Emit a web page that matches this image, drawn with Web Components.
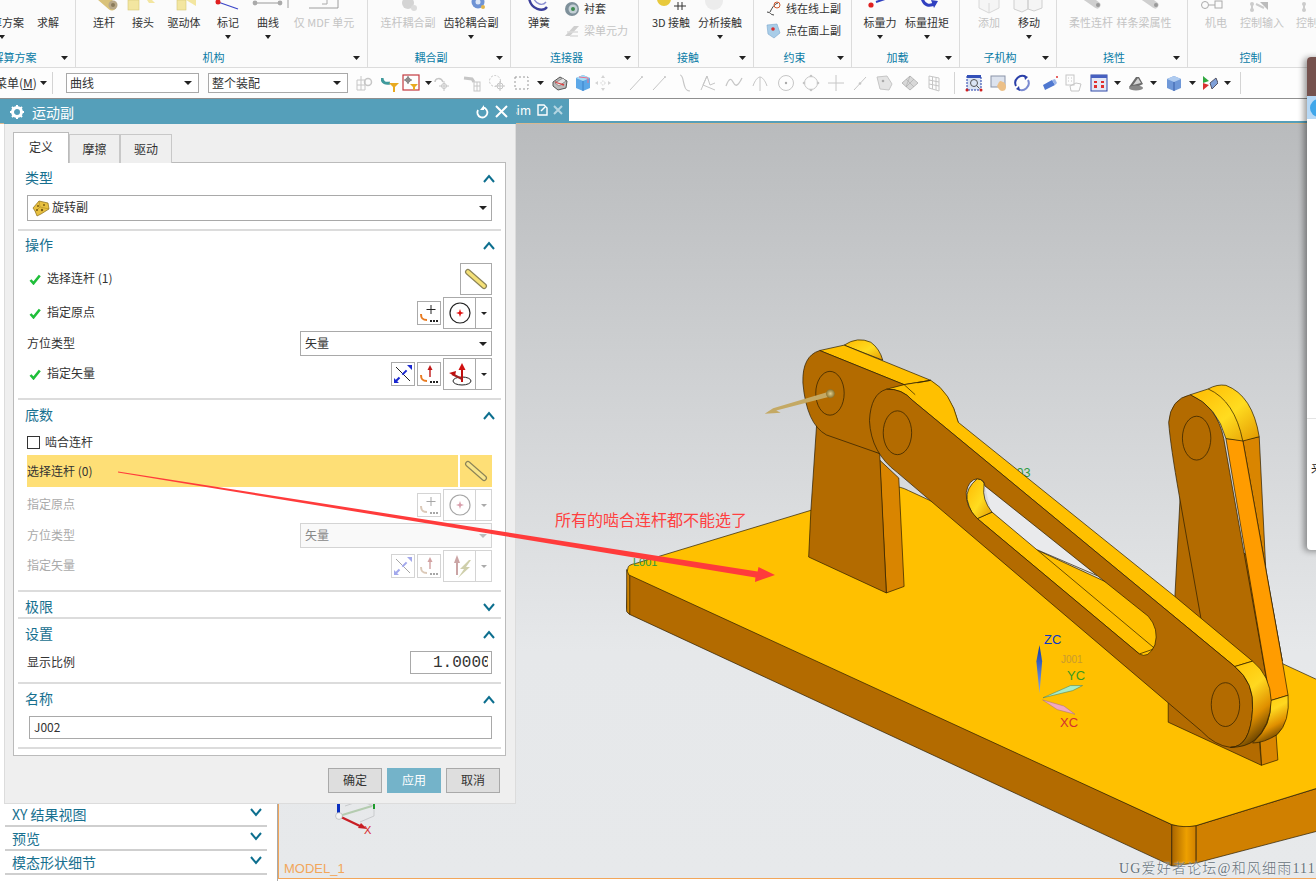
<!DOCTYPE html>
<html lang="zh"><head><meta charset="utf-8"><title>运动副</title>
<style>
html,body{margin:0;padding:0;background:#fff;width:1316px;height:882px;overflow:hidden}
body{font:12px/1 "Noto Sans CJK SC","Liberation Sans",sans-serif;color:#333}
svg{display:block}
</style></head><body>

<ui-app>
<ui-ribbon slot="top">
  <ui-group w="106" label="解算方案" arrow style="margin-left:-30px">
    <ui-tool w="54" pad="5" arrow>解算方案</ui-tool><ui-tool w="36" style="margin-left:1px">求解</ui-tool>
  </ui-group>
  <ui-group w="292" label="机构" arrow>
    <ui-tool w="40" pad="8"><svg slot="icon" width="40" height="15"><path d="M14 -6L28 6" stroke="#d9c27a" stroke-width="9" stroke-linecap="round"/><circle cx="29" cy="5" r="4.5" fill="#b8a888"/><circle cx="29" cy="5" r="2" fill="#8a7a5a"/></svg>连杆</ui-tool>
    <ui-tool w="38"><svg slot="icon" width="38" height="15"><rect x="4" y="0" width="11" height="10" fill="#f3e6a0" stroke="#d8c878" stroke-width=".6"/><path d="M23 0h5l3 3h-6z" fill="#f3e6a0"/></svg>接头</ui-tool>
    <ui-tool w="44"><svg slot="icon" width="44" height="15"><rect x="15" y="0" width="9" height="10" fill="#f3e6a0" stroke="#d8c878" stroke-width=".6"/><path d="M24 0h10v6z" fill="#f3e6a0"/></svg>驱动体</ui-tool>
    <ui-tool w="44" arrow><svg slot="icon" width="44" height="15"><path d="M12 2L32 9" stroke="#3a45c8" stroke-width="1.2"/><circle cx="12" cy="2" r="2.5" fill="#e02020"/></svg>标记</ui-tool>
    <ui-tool w="36" arrow><svg slot="icon" width="36" height="15"><path d="M5 3H30" stroke="#999"/><circle cx="5" cy="3" r="2.4" fill="#aaa"/><circle cx="30" cy="3" r="2.4" fill="#aaa"/></svg>曲线</ui-tool>
    <ui-tool w="76" off><svg slot="icon" width="76" height="15"><path d="M2 -3v11M23 8h29V-2" stroke="#888" stroke-width=".8" fill="none"/><path d="M41 0v4h-5" stroke="#aaa" fill="none"/></svg>仅 MDF 单元</ui-tool>
  </ui-group>
  <ui-group w="143" label="耦合副" arrow>
    <ui-tool w="64" pad="8" off><svg slot="icon" width="64" height="15"><circle cx="32" cy="3" r="6" fill="#d4d4d4"/><circle cx="38" cy="8" r="3" fill="#dcdcdc"/></svg>连杆耦合副</ui-tool>
    <ui-tool w="62" arrow><svg slot="icon" width="62" height="15"><circle cx="38" cy="2" r="6.5" fill="#6f93d4"/><circle cx="38" cy="2" r="2.5" fill="#dce6f6"/><circle cx="43" cy="7" r="2" fill="#e2b54c"/></svg>齿轮耦合副</ui-tool>
  </ui-group>
  <ui-group w="128" label="连接器" arrow>
    <ui-tool w="40" pad="8"><svg slot="icon" width="40" height="15"><path d="M10 -2c2 12 14 14 18 9" stroke="#3b3f9a" stroke-width="2.4" fill="none"/><path d="M14 -3c3 8 10 9 13 5" stroke="#8b8fd0" stroke-width="1.4" fill="none"/></svg>弹簧</ui-tool>
    <ui-stack style="margin-left:5px">
      <ui-line><svg slot="icon" width="16" height="16"><circle cx="8" cy="8" r="7" fill="#7e909a"/><circle cx="9" cy="8" r="4.5" fill="#c4d0d6"/><circle cx="9" cy="8" r="2" fill="#3f8a50"/></svg>衬套</ui-line>
      <ui-line off><svg slot="icon" width="16" height="16"><path d="M1 13L10 3h5l-9 10z" fill="#cfcfcf"/><path d="M3 9h11M6 13h8" stroke="#dcdcdc" stroke-width="1.5"/></svg>梁单元力</ui-line>
    </ui-stack>
  </ui-group>
  <ui-group w="115" label="接触" arrow>
    <ui-tool w="48" pad="8"><svg slot="icon" width="48" height="15"><circle cx="17" cy="-1" r="7" fill="#e8c93c"/><path d="M27 6h12M31 2v8M35 2v8" stroke="#333" fill="none"/></svg>3D 接触</ui-tool>
    <ui-tool w="50" arrow><svg slot="icon" width="50" height="15"><ellipse cx="19" cy="1" rx="9" ry="9" fill="#ececec"/></svg>分析接触</ui-tool>
  </ui-group>
  <ui-group w="98" label="约束" arrow>
    <ui-stack style="margin-left:11px">
      <ui-line t><svg slot="icon" width="17" height="17"><path d="M2 12c4 0 3 3 7 3M5 12c3-6 5-8 8-9" stroke="#444" fill="none"/><circle cx="12" cy="5" r="3" fill="none" stroke="#d05a30"/></svg>线在线上副</ui-line>
      <ui-line t><svg slot="icon" width="17" height="17"><path d="M2 3l10-1 3 9-6 5-6-4z" fill="#a9cde8" stroke="#7aa6cc" stroke-width=".6"/><circle cx="8" cy="7" r="1.8" fill="#d83030"/></svg>点在面上副</ui-line>
    </ui-stack>
  </ui-group>
  <ui-group w="108" label="加载" arrow>
    <ui-tool w="40" pad="8" arrow><svg slot="icon" width="40" height="15"><circle cx="11" cy="5" r="2.6" fill="#e02020"/><path d="M16 2l9-3" stroke="#3040c0" stroke-width="2"/></svg>标量力</ui-tool>
    <ui-tool w="54" arrow><svg slot="icon" width="54" height="15"><path d="M22 -2c2 8 8 9 13 5" stroke="#3040c0" stroke-width="3" fill="none"/><path d="M31 0l7 1-4 7z" fill="#3040c0"/></svg>标量扭矩</ui-tool>
  </ui-group>
  <ui-group w="97" label="子机构" arrow>
    <ui-tool w="42" pad="8" off><svg slot="icon" width="42" height="15"><path d="M11 0v8l10 5 10-5V0M21 3v10" stroke="#d8d8d8" fill="#f5f5f5"/></svg>添加</ui-tool>
    <ui-tool w="38" arrow><svg slot="icon" width="38" height="15"><path d="M4 0v9l8 3 6-3V0M18 0v9l6 2 8-3V0" stroke="#cfcfcf" fill="#f5f5f5"/></svg>移动</ui-tool>
  </ui-group>
  <ui-group w="131" label="挠性" arrow>
    <ui-tool w="52" pad="8" off><svg slot="icon" width="52" height="15"><path d="M22 -2L32 5" stroke="#cfcfcf" stroke-width="7" stroke-linecap="round"/><circle cx="33" cy="5" r="2" fill="#999"/></svg>柔性连杆</ui-tool>
    <ui-tool w="54" off><svg slot="icon" width="54" height="15"><path d="M28 -2L38 5" stroke="#cfcfcf" stroke-width="7" stroke-linecap="round"/><circle cx="39" cy="5" r="2" fill="#999"/></svg>样条梁属性</ui-tool>
  </ui-group>
  <ui-group w="142" label="控制">
    <ui-tool w="40" pad="8" off><svg slot="icon" width="40" height="15"><circle cx="9" cy="5" r="3.5" fill="none" stroke="#aaa"/><path d="M13 5h6" stroke="#aaa"/><rect x="19" y="1" width="7" height="7" fill="none" stroke="#aaa"/></svg>机电</ui-tool>
    <ui-tool w="52" off><svg slot="icon" width="52" height="15"><circle cx="16" cy="4" r="2" fill="#ccc"/><circle cx="16" cy="10" r="2" fill="#ccc"/><path d="M16 4v6M20 4l8 4" stroke="#ccc" stroke-width="2"/><path d="M24 2h8v8z" fill="#bbb"/></svg>控制输入</ui-tool>
    <ui-tool w="60" off><svg slot="icon" width="60" height="15"><circle cx="16" cy="4" r="2" fill="#ccc"/><circle cx="16" cy="10" r="2" fill="#ccc"/><path d="M16 4v6" stroke="#ccc" stroke-width="2"/></svg>控制输出</ui-tool>
  </ui-group>
</ui-ribbon>
<ui-toolbar slot="top"></ui-toolbar>
<ui-tabstrip slot="top"></ui-tabstrip>

<ui-side slot="left">
  <ui-foldrow>XY 结果视图</ui-foldrow>
  <ui-foldrow>预览</ui-foldrow>
  <ui-foldrow>模态形状细节</ui-foldrow>
</ui-side>

<ui-viewport slot="right">
<svg width="1037" height="754" viewBox="279 124 1037 754" style="position:absolute;left:0;top:0">
  <defs>
    <linearGradient id="gold" x1="0" y1="0" x2="1" y2="1"><stop offset="0" stop-color="#ffb800"/><stop offset=".55" stop-color="#ffdc20"/><stop offset="1" stop-color="#e39800"/></linearGradient>
    <linearGradient id="endg" x1="0" y1="0" x2=".4" y2="1"><stop offset="0" stop-color="#ffc000"/><stop offset=".45" stop-color="#ffd820"/><stop offset=".75" stop-color="#e09000"/><stop offset="1" stop-color="#6d4500"/></linearGradient>
    <linearGradient id="corner" x1="0" y1="0" x2="1" y2="0"><stop offset="0" stop-color="#a86400"/><stop offset=".6" stop-color="#eda000"/><stop offset="1" stop-color="#d08000"/></linearGradient>
    <linearGradient id="zsp" x1="0" y1="0" x2="0" y2="1"><stop offset="0" stop-color="#0a38a8"/><stop offset="1" stop-color="#8aaae8"/></linearGradient>
    <radialGradient id="ball"><stop offset="0" stop-color="#e0cf90"/><stop offset="1" stop-color="#8a7430"/></radialGradient>
    <style>.e{stroke:#2a1c00;stroke-width:.7;vector-effect:non-scaling-stroke;stroke-linejoin:round}.d{fill:#b36b00}.m{fill:#d98500}.y{fill:#ffc000}</style>
  </defs>
  <g transform="translate(620,320) scale(.4439,.3591)">
    <path class="e d" d="M18,700L1243,1405V1520L22,820Q15,815 15,800Z"/>
    <path class="e" fill="#cc8200" d="M15,695L22,708V820L15,812Z"/>
    <path class="e" fill="url(#corner)" d="M1243,1405Q1270,1413 1298,1408V1512L1243,1520Z"/>
    <path class="e" fill="#d08000" d="M1298,1408L1600,1293V1414L1298,1512Z"/>
    <path class="e y" d="M18,690Q18,682 35,678L430,530L615,465Q630,462 650,475L1620,1030V1285L1298,1408Q1270,1415 1243,1405L20,710Q14,700 18,690Z"/>

    <path class="e m" d="M1442,1170L1445,1240L1482,1225L1478,1155Z"/>
    <path class="e d" d="M1262,490L1250,770L1235,1060V1120L1445,1240L1440,1165L1470,1150L1452,700Z"/>
    <path class="e d" d="M1285,208Q1240,220 1236,285Q1240,350 1260,490L1310,840L1465,1060L1360,330Q1345,240 1285,208Z"/>
    <path class="e m" d="M1403,335L1440,325L1455,700L1492,950Z"/>
    <path class="e" fill="#ff9c00" d="M1365,330L1403,335L1492,950L1505,1045L1465,1060Z"/>
    <path class="e" fill="url(#gold)" d="M1285,208L1325,192Q1345,178 1365,182Q1425,210 1440,325L1403,337L1365,330Q1345,240 1285,208Z"/>
    <path class="e" d="M1325,192Q1385,225 1403,337" fill="none"/>
    <path class="e" fill="url(#endg)" d="M1465,1060L1505,1045Q1510,1120 1480,1155Q1450,1178 1425,1178Q1470,1130 1465,1060Z"/>
    <ellipse class="e" cx="1299" cy="329" rx="32" ry="61" fill="none"/>

    <path class="e m" d="M585,390L600,760L640,742L628,440Z"/>
    <path class="e d" d="M443,290L430,530L425,660L600,760L585,372Z"/>

    <path class="e" fill="url(#gold)" d="M505,70Q535,45 565,62Q585,80 592,112Z"/>
    <path class="e y" d="M450,85L505,70L700,168L640,180Z"/>
    <path class="e" fill="url(#gold)" d="M695,168Q745,200 762,285L700,230Z"/>
    <path class="e d" d="M450,85Q410,100 412,175Q420,290 465,320L585,372L640,300V180Z"/>
    <ellipse class="e" cx="473" cy="204" rx="32" ry="61" fill="none"/>

    <text x="863" y="436" font-size="26" fill="#2e9a3e" font-family="Liberation Sans" transform="translate(863,436) scale(1.1,1.4) translate(-863,-436)">J003</text>

    <path fill="#e9eaec" d="M822,462L1075,712L940,640L835,530Z"/>
    <path class="e" fill="none" d="M940,640L1075,712"/>
    <path class="e y" d="M805,553L1170,930L1205,915L838,535Z"/>
    <path class="e" fill="url(#gold)" d="M805,442Q778,470 782,500Q790,540 805,553L838,535Q815,500 820,462Q822,445 805,442Z"/>

    <path class="e y" d="M600,193L640,180L700,168Q745,200 762,285L1250,770L1425,950L1385,965L660,225Q635,190 600,193Z"/>
    <path class="e" d="M640,180L665,208M670,175L700,168" fill="none"/>
    <path class="e d" fill-rule="evenodd" d="M600,193Q635,190 660,225L1385,965Q1430,1010 1425,1085Q1420,1190 1375,1190Q1340,1185 1310,1145L625,425Q565,370 562,280Q565,205 600,193ZM805,442Q822,445 822,462L1190,825Q1215,860 1205,905Q1190,945 1170,930L805,553Q778,520 780,480Q785,445 805,442Z"/>
    <path class="e" fill="url(#endg)" d="M1385,965L1425,950Q1465,990 1467,1060Q1465,1130 1430,1170Q1410,1190 1375,1190Q1420,1190 1425,1085Q1430,1010 1385,965Z"/>
    <ellipse class="e" cx="625" cy="314" rx="32" ry="61" fill="none"/>
    <ellipse class="e" cx="1364" cy="1071" rx="32" ry="61" fill="none"/>

    <path fill="#c4a964" d="M470,200L345,246L326,261L362,258L352,252L476,212Z"/>
    <ellipse cx="474" cy="205" rx="10" ry="12" fill="url(#ball)"/>

    <path fill="url(#zsp)" d="M945,905L938,950L945,1040L951,950Z"/>
    <path fill="#a6ecc6" stroke="#3e7a60" stroke-width=".5" vector-effect="non-scaling-stroke" d="M953,1052L1015,1018L1042,1018L1020,1032Z"/>
    <path fill="#f2a8c0" stroke="#a07080" stroke-width=".5" vector-effect="non-scaling-stroke" d="M952,1058L1000,1075L1025,1098L985,1085Z"/>
  </g>
  <g font-family="Liberation Sans" font-size="13">
    <text x="1044" y="644" fill="#0838c8">ZC</text>
    <text x="1067" y="680" fill="#3a9a20">YC</text>
    <text x="1060" y="727" fill="#d43030">XC</text>
    <text x="633" y="566" fill="#2e9a3e" font-size="11">L001</text>
    <text x="1061" y="663" fill="#c89a30" font-size="10">J001</text>
  </g>
  <g>
    <path d="M339 816L372 806" stroke="#b4ccb0" stroke-width="2"/><path d="M345 806L360 801L374 806V816L360 822" fill="none" stroke="#c9cbcd"/><rect x="373" y="804" width="2" height="5" fill="#1d9a2c"/>
    <rect x="337" y="804" width="3" height="9" fill="#0a2fc0"/>
    <path d="M341 817L362 827" stroke="#c81e24" stroke-width="2.4"/><path d="M358 828l9 1-6-6z" fill="#c81e24"/>
    <circle cx="339" cy="816" r="3.4" fill="#f4f4f4" stroke="#aaa" stroke-width=".6"/>
    <text x="364" y="834" font-family="Liberation Sans" font-size="11" fill="#d8282c">X</text>
  </g>
</svg>
<ui-model>MODEL_1</ui-model>
</ui-viewport>

<ui-dialog slot="over" heading="运动副">
  <ui-section title="类型" style="--h:30px">
    <ui-select w="465" h="26" style="margin-top:2px"><svg slot="icon" width="18" height="18"><path d="M1 9l6-7 9 2 1 6-8 5-4 2-2-5z" fill="#e8c040" stroke="#8a6c18" stroke-width=".7"/><path d="M7 2l1 6 9 2M8 8L3 13" stroke="#a08020" stroke-width=".5" fill="none"/><circle cx="6" cy="7" r="1" fill="#7a5c10"/><circle cx="12" cy="6" r="1" fill="#7a5c10"/><circle cx="10" cy="11" r="1.200" fill="#7a5c10"/><circle cx="5" cy="11" r="1" fill="#7a5c10"/></svg>旋转副</ui-select>
  </ui-section>
  <ui-section title="操作" style="--h:28px">
    <ui-row h="32" style="margin-top:4px"><ui-label check>选择连杆 (1)</ui-label>
      <ui-btn w="32" h="32"><svg width="24" height="24" viewBox="0 0 24 24"><path d="M4 5L20 19" stroke="#8c8458" stroke-width="6" stroke-linecap="round"/><path d="M4 5L20 19" stroke="#f5e178" stroke-width="3.6" stroke-linecap="round"/></svg></ui-btn></ui-row>
    <ui-row h="32" style="margin-top:2px"><ui-label check>指定原点</ui-label>
      <ui-btn w="24" h="24"><svg width="22" height="22" viewBox="0 0 22 22"><path d="M13 3v9M8.5 7.500h9" stroke="#222"/><path d="M3 12c0 5 2 6 6 6" stroke="#e87a20" stroke-width="2" fill="none"/><path d="M12 19h2M15 19h2M18 19h2" stroke="#222" stroke-width="2"/></svg></ui-btn>
      <ui-split><svg width="24" height="24" viewBox="0 0 24 24"><circle cx="12" cy="12" r="10" fill="none" stroke="#222" stroke-width="1.200"/><path d="M12 8l1 3 3 1-3 1-1 3-1-3-3-1 3-1z" fill="#e01010"/></svg></ui-split></ui-row>
    <ui-row h="25" style="margin-top:2px"><span>方位类型</span><ui-select w="192" h="25">矢量</ui-select></ui-row>
    <ui-row h="32" style="margin-top:2px"><ui-label check>指定矢量</ui-label>
      <ui-btn w="24" h="24"><svg width="22" height="22" viewBox="0 0 22 22"><path d="M4 4L18 18" stroke="#222"/><path d="M4 18L18 4" stroke="#1a28d0" stroke-width="2" stroke-dasharray="5 4 6"/><path d="M15 2h5v5zM2 15v5h5z" fill="#1a28d0"/></svg></ui-btn>
      <ui-btn w="24" h="24"><svg width="22" height="22" viewBox="0 0 22 22"><path d="M12 14V5" stroke="#c01818" stroke-width="1.400"/><path d="M9.500 7L12 2l2.500 5z" fill="#c01818"/><path d="M3 12c0 5 2 6 6 6" stroke="#e87a20" stroke-width="2" fill="none"/><path d="M12 19h2M15 19h2M18 19h2" stroke="#222" stroke-width="2"/></svg></ui-btn>
      <ui-split><svg width="26" height="26" viewBox="0 0 26 26"><ellipse cx="15" cy="20" rx="9" ry="4" fill="none" stroke="#222"/><path d="M15 21V8" stroke="#c01010" stroke-width="2"/><path d="M11.500 9L15 2l3.500 7z" fill="#d01010"/><path d="M15 18L5 13" stroke="#a02020" stroke-width="2"/><path d="M2 12l7-2-1 5z" fill="#c01010"/></svg></ui-split></ui-row>
  </ui-section>
  <ui-section title="底数" style="--h:30px">
    <ui-row h="20" style="margin-top:2px"><ui-check>啮合连杆</ui-check></ui-row>
    <ui-row h="32" style="margin-top:3px"><ui-hilite>选择连杆 (0)</ui-hilite>
      <ui-hilite w="32"><svg width="24" height="24" viewBox="0 0 24 24"><path d="M4 5L20 19" stroke="#8c8458" stroke-width="6" stroke-linecap="round"/><path d="M4 5L20 19" stroke="#f8e488" stroke-width="3.600" stroke-linecap="round"/></svg></ui-hilite></ui-row>
    <ui-row h="32" off style="margin-top:2px"><span>指定原点</span>
      <ui-btn w="24" h="24" off><svg width="22" height="22" viewBox="0 0 22 22"><path d="M13 3v9M8.500 7.500h9" stroke="#222"/><path d="M3 12c0 5 2 6 6 6" stroke="#a87a50" stroke-width="2" fill="none"/><path d="M12 19h2M15 19h2M18 19h2" stroke="#222" stroke-width="2"/></svg></ui-btn>
      <ui-split off><svg width="24" height="24" viewBox="0 0 24 24"><circle cx="12" cy="12" r="10" fill="none" stroke="#222" stroke-width="1.200"/><path d="M12 8l1 3 3 1-3 1-1 3-1-3-3-1 3-1z" fill="#a01030"/></svg></ui-split></ui-row>
    <ui-row h="25" off style="margin-top:2px"><span>方位类型</span><ui-select w="192" h="25" off>矢量</ui-select></ui-row>
    <ui-row h="32" off style="margin-top:2px"><span>指定矢量</span>
      <ui-btn w="24" h="24" off><svg width="22" height="22" viewBox="0 0 22 22"><path d="M4 4L18 18" stroke="#222"/><path d="M4 18L18 4" stroke="#1a28d0" stroke-width="2" stroke-dasharray="5 4 6"/><path d="M15 2h5v5zM2 15v5h5z" fill="#1a28d0"/></svg></ui-btn>
      <ui-btn w="24" h="24" off><svg width="22" height="22" viewBox="0 0 22 22"><path d="M12 14V5" stroke="#901818" stroke-width="1.400"/><path d="M9.500 7L12 2l2.500 5z" fill="#901818"/><path d="M3 12c0 5 2 6 6 6" stroke="#a87a50" stroke-width="2" fill="none"/><path d="M12 19h2M15 19h2M18 19h2" stroke="#222" stroke-width="2"/></svg></ui-btn>
      <ui-split off><svg width="26" height="26" viewBox="0 0 26 26"><path d="M10 22V9" stroke="#802020" stroke-width="2"/><path d="M7 10L10 2l3 8z" fill="#802020"/><path d="M22 7l-9 9h4l-6 9 12-11h-4l5-7z" fill="#8a8a30"/></svg></ui-split></ui-row>
  </ui-section>
  <ui-section title="极限" closed style="--h:30px"></ui-section>
  <ui-section title="设置" style="--h:30px">
    <ui-row h="23" style="margin-top:2px"><span>显示比例</span><ui-input w="82" mono>1.00000</ui-input></ui-row>
  </ui-section>
  <ui-section title="名称" style="--h:30px">
    <ui-row h="23" style="margin-top:2px;margin-left:2px"><ui-input w="463">J002</ui-input></ui-row>
  </ui-section>
  <ui-action slot="actions">确定</ui-action>
  <ui-action slot="actions" primary>应用</ui-action>
  <ui-action slot="actions">取消</ui-action>
</ui-dialog>

<ui-window slot="over"></ui-window>
<ui-note slot="over">所有的啮合连杆都不能选了</ui-note>
<ui-mark slot="over">UG爱好者论坛@和风细雨111</ui-mark>
</ui-app>

<script>
const def=(tag,css,html,init)=>customElements.define(tag,class extends HTMLElement{
  connectedCallback(){ if(this.shadowRoot)return;
    const r=this.attachShadow({mode:'open'});
    r.innerHTML=`<style>${css}</style>${typeof html==='function'?html(this):html}`;
    if(init)init(this,r);
  }});
const tri=(c='#222',w=8,h=4)=>`<svg width="${w}" height="${h}" style="display:block"><path d="M0 0H${w}L${w/2} ${h}z" fill="${c}"/></svg>`;

def('ui-app',`:host{display:block;position:relative;width:1316px;height:882px;overflow:hidden;background:#fff}
 .main{display:flex;height:757px}`,
 `<slot name="top"></slot><div class="main"><slot name="left"></slot><slot name="right"></slot></div><slot name="over"></slot>`);

def('ui-ribbon',`:host{display:flex;height:67px;background:#fbfbfb;border-bottom:1px solid #dcdcdc;overflow:hidden}`,`<slot></slot>`);

def('ui-group',`:host{display:block;flex:none;position:relative;box-sizing:border-box;height:67px;border-right:1px solid #dcdcdc}
 .t{display:flex;height:50px;align-items:flex-start}
 .f{position:absolute;left:0;right:16px;top:50px;text-align:center;font-size:11px;line-height:14px;color:#0a7ca6;white-space:nowrap}
 .a{position:absolute;right:7px;top:56px}`,
 h=>`<div class="t"><slot></slot></div><div class="f">${h.getAttribute('label')}</div>${h.hasAttribute('arrow')?`<div class="a">${tri('#222',7,4)}</div>`:''}`,
 h=>{h.style.width=h.getAttribute('w')+'px'});

def('ui-tool',`:host{display:flex;flex:none;flex-direction:column;align-items:center;height:50px;font-size:11px;color:#333;white-space:nowrap}
 :host([off]){color:#c4c4c4}
 .i{width:100%;height:14px;overflow:hidden;flex:none}
 .l{height:16px;line-height:16px;flex:none}
 .a{margin-top:5px}`,
 h=>`<div class="i"><slot name="icon"></slot></div><div class="l"><slot></slot></div>${h.hasAttribute('arrow')?`<div class="a">${tri('#222',6,4)}</div>`:''}`,
 h=>{h.style.width=h.getAttribute('w')+'px';if(h.getAttribute('pad'))h.style.marginLeft=h.getAttribute('pad')+'px'});

def('ui-stack',`:host{display:flex;flex-direction:column;gap:5px;padding-top:0}`,`<slot></slot>`);
def('ui-line',`:host{display:flex;align-items:center;gap:4px;height:17px;font-size:11px;color:#333;white-space:nowrap}
 :host([off]){color:#c4c4c4}`,`<slot name="icon"></slot><slot></slot>`);

const G='#c6c6c6';
const ic={
 a:`<path d="M2 6h8v10H2zM2 11h8M6 2v14" stroke="${G}" fill="none"/><circle cx="13" cy="8" r="3.500" fill="none" stroke="${G}" stroke-width="1.500"/>`,
 b:`<path d="M1 4c0 5 4 6 8 5" stroke="#3f9a9c" stroke-width="3" fill="none"/><path d="M8 9h10l-4 4v5h-2v-5z" fill="#e8aa20"/>`,
 c:`<rect x="1" y="1" width="16" height="15" fill="none" stroke="#c43a40" stroke-width="1.200"/><circle cx="6" cy="6" r="2.200" fill="none" stroke="#666"/><path d="M6 2v8M2 6h8" stroke="#666"/><path d="M8 10h8l-3 3v3h-2v-3z" fill="#e8aa20"/>`,
 d:`<path d="M3 8c0-4 6-5 8 0" stroke="${G}" stroke-width="1.500" fill="none"/><path d="M12 7v10M7 12h10" stroke="${G}"/><circle cx="12" cy="12" r="2.500" fill="none" stroke="${G}"/>`,
 e:`<path d="M1 4l8 1 2 3" stroke="${G}" stroke-width="3" fill="none"/><rect x="11" y="8" width="6" height="9" fill="none" stroke="${G}"/><path d="M11 12h6M14 8v9" stroke="${G}"/>`,
 f:`<circle cx="7" cy="7" r="5.500" fill="none" stroke="${G}" stroke-dasharray="2 1.500"/><circle cx="12" cy="12" r="3" fill="none" stroke="${G}"/><path d="M12 7v10M7 12h10" stroke="${G}"/>`,
 g:`<rect x="2" y="3" width="13" height="12" fill="none" stroke="#999" stroke-dasharray="2 2"/>`,
 h:`<path d="M2 8l7-5 7 4-1 7-8 2-5-4z" fill="#bbb" stroke="#555"/><path d="M4 8l9 3" stroke="#e03a3a" stroke-width="1.500"/><path d="M4 9l8-5 3 3-7 5z" fill="#e4e4e4" stroke="#666" stroke-width=".6"/><path d="M5 8.500l7 2" stroke="#e04040" stroke-width="1.200"/>`,
 i:`<path d="M2 4l7-3 7 3v10l-7 3-7-3z" fill="#5da8e8"/><path d="M2 4l7 3 7-3-7-3z" fill="#a8dcf4"/><path d="M9 7v10" stroke="#3c80c8"/><path d="M5 3l9 1v5" stroke="#e87090" fill="none"/>`,
 j:`<path d="M9 1l2 3H7zM9 17l2-3H7zM1 9l3-2v4zM17 9l-3-2v4z" fill="#d4d4d4"/><circle cx="9" cy="9" r="2" fill="none" stroke="#d4d4d4" stroke-dasharray="1.500 1"/>`,
 k:`<path d="M3 16L15 3" stroke="${G}"/><circle cx="15" cy="3" r="1" fill="${G}"/>`,
 l:`<path d="M4 1c3 0 3 6 4 9s1 7 6 7" stroke="${G}" fill="none" stroke-width="1.200"/>`,
 m:`<path d="M2 16L8 2l3 9 5-2M8 2l-4 9 12 5" stroke="${G}" fill="none"/>`,
 n:`<path d="M1 12c3-8 5-8 7-4s4 6 9-4" stroke="${G}" fill="none" stroke-width="1.300"/>`,
 o:`<path d="M9 3v14M2 12c2-6 5-9 7-9s5 3 7 9" stroke="${G}" fill="none"/>`,
 p:`<circle cx="9" cy="9" r="7.500" fill="none" stroke="${G}"/><circle cx="9" cy="9" r="1.200" fill="#aaa"/>`,
 q:`<circle cx="9" cy="9" r="6.500" fill="none" stroke="${G}"/><circle cx="9" cy="2" r="1.300" fill="${G}"/><circle cx="9" cy="16" r="1.300" fill="${G}"/><circle cx="2" cy="9" r="1.300" fill="${G}"/><circle cx="16" cy="9" r="1.300" fill="${G}"/>`,
 r:`<path d="M9 1v16M1 9h16" stroke="${G}"/>`,
 s:`<path d="M3 16L15 3" stroke="${G}"/><circle cx="9" cy="9.500" r="1.300" fill="${G}"/>`,
 t:`<path d="M2 3l10-1 5 8-3 6-9-1z" fill="#e4e4e4" stroke="${G}"/><circle cx="8" cy="7" r="1.300" fill="#aaa"/>`,
 u:`<path d="M9 2l8 7-8 7-8-7z" fill="#d8d8d8" stroke="#bbb"/><path d="M5 5l8 8M9 2l-4 11M13 5l-8 8" stroke="#aaa" stroke-width=".6"/>`,
 v:`<path d="M4 2l10 2v13L4 14zM4 6l10 2M4 10l10 2M7.500 3v12M11 3.500v12.500" stroke="${G}" fill="none"/>`,
 w:`<rect x="2" y="2" width="14" height="14" fill="#dbe4f4" stroke="#1f3aa8" stroke-dasharray="2 1"/><rect x="2" y="1" width="14" height="3" fill="#3350b8"/><circle cx="9" cy="9" r="3.500" fill="none" stroke="#555"/><path d="M11.500 11.500l3 3" stroke="#555"/><circle cx="2" cy="16" r="1.500" fill="#d02020"/><circle cx="16" cy="16" r="1.500" fill="#d02020"/>`,
 x:`<rect x="1" y="2" width="14" height="11" fill="#dde3ee" stroke="#8a93a8"/><path d="M9 8c2-2 3 0 4 0s3 2 3 5-2 4-4 4-4-3-5-5z" fill="#ecc088"/>`,
 y:`<path d="M3 12A7 7 0 0 1 13 3" stroke="#2a3fa8" stroke-width="2" fill="none"/><path d="M15 6A7 7 0 0 1 5 15" stroke="#7a8ad0" stroke-width="2" fill="none"/><path d="M11 1l4 2-3 3zM7 17l-4-2 3-3z" fill="#2a3fa8"/>`,
 z:`<path d="M2 11l9-5 3 5-10 5z" fill="#4f78d0"/><path d="M11 6l3 5 2-2-2-4z" fill="#9ab4e8"/><circle cx="16" cy="3" r="1" fill="#e03030"/>`,
 A:`<rect x="2" y="1" width="8" height="10" fill="none" stroke="${G}"/><path d="M4 4h1M7 4h1M4 7h1M7 7h1" stroke="${G}"/><path d="M6 12l6-3 5 1-2 7H7z" fill="none" stroke="${G}"/>`,
 B:`<rect x="1" y="1" width="16" height="16" fill="#e4e9f6" stroke="#2f48a8"/><rect x="1" y="1" width="16" height="3" fill="#4760c0"/><path d="M4 7h3v2H4zM11 7h3v2h-3zM4 11h3v3H4zM11 11h3v3h-3z" fill="#e03030"/>`,
 C:`<path d="M2 13l7-10h3l4 7-4 2v3H5z" fill="#6a6a6a"/><path d="M6 11l5-7 3 5z" fill="#d4d4d4"/><ellipse cx="9" cy="14" rx="7" ry="2.500" fill="#888"/>`,
 D:`<path d="M2 5l7-3 7 3v9l-7 3-7-3z" fill="#6f98d8"/><path d="M2 5l7 3 7-3-7-3z" fill="#b0ccf0"/><path d="M9 8v9" stroke="#3a5fa8"/>`,
 E:`<path d="M10 9l6-5 2 5-6 6z" fill="#7fa0d8" stroke="#556"/><path d="M3 2l6 5-6 2z" fill="#30a840"/><path d="M3 16l6-5-6-2z" fill="#d83030"/>`
};
const items=[[364,'a'],[390,'b'],[411,'c'],[428,0],[441,'d'],[472,'e'],[497,'f'],[522,'g'],[540,0],[560,'h'],[583,'i'],[603,'j'],[636,'k'],[659,'k'],[685,'l'],[708,'m'],[734,'n'],[760,'o'],[786,'p'],[811,'q'],[836,'r'],[860,'s'],[884,'t'],[910,'u'],[934,'v'],[954,1],[974,'w'],[999,'x'],[1022,'y'],[1050,'z'],[1073,'A'],[1099,'B'],[1117,0],[1136,'C'],[1153,0],[1174,'D'],[1192,0],[1209,'E'],[1227,0],[1240,1]];
let prev=348,tb='';
for(const [c,k] of items){
 const w=k===0?7:k===1?1:18, ml=c-w/2-prev; prev=c+w/2;
 const st=`margin-left:${ml}px;flex:none`;
 tb+= k===0?`<div style="${st}">${tri('#222',7,4)}</div>`
   : k===1?`<div style="${st};width:1px;height:22px;background:#d4d4d4"></div>`
   : `<svg style="${st}" width="18" height="18" viewBox="0 0 18 18">${ic[k]}</svg>`;
}
def('ui-toolbar',`:host{display:flex;align-items:center;height:30px;background:#fdfdfd;border-bottom:1px solid #8f8f8f;overflow:hidden;font-size:12px;color:#333}
 .m{margin-left:-5px;width:42px;white-space:nowrap;flex:none}.m u{text-decoration:underline}
 .a{margin-left:3px;flex:none}.s{width:1px;height:22px;background:#d4d4d4;margin-left:5px;flex:none}
 .sel{box-sizing:border-box;height:20px;border:1px solid #a9a9a9;display:flex;align-items:center;justify-content:space-between;padding:0 6px 0 3px;background:#fff;flex:none;white-space:nowrap}`,
 `<span class="m">菜单(<u>M</u>)</span><div class="a">${tri('#222',7,4)}</div><div class="s"></div>
  <div class="sel" style="margin-left:13px;width:133px">曲线${tri('#222',8,4)}</div>
  <div class="sel" style="margin-left:9px;width:140px">整个装配${tri('#222',8,4)}</div>${tb}`);

def('ui-tabstrip',`:host{display:block;height:25px;background:#fff;box-sizing:border-box}
 .r{display:flex;height:22px}
 .t{width:569px;background:#559fba;color:#fff;display:flex;align-items:center;justify-content:flex-end;gap:5px;padding-right:6px;box-sizing:border-box;font-size:12px}
 .l{height:2px;background:#559fba}.o{height:1px;background:#d8b890}`,
 `<div class="r"><div class="t"><span style="margin-right:1px">sim</span>
  <svg width="11" height="12" viewBox="0 0 11 12"><path d="M1 1h6l3 3v7H1z" fill="none" stroke="#fff" stroke-width="1.400"/><path d="M4 7l4-4" stroke="#fff" stroke-width="1.400"/></svg>
  <svg width="10" height="10" viewBox="0 0 10 10"><path d="M1 1l8 8M9 1l-8 8" stroke="#b4d6e2" stroke-width="2"/></svg></div></div>
  <div class="l"></div><div class="o"></div>`);

def('ui-side',`:host{display:flex;flex-direction:column;justify-content:flex-end;flex:none;box-sizing:border-box;width:278px;height:757px;padding:0 10px 6px 5px;border-right:1px solid #aaa;background:#fff}`,`<slot></slot>`);
def('ui-foldrow',`:host{display:flex;align-items:center;justify-content:space-between;box-sizing:border-box;height:24px;border-bottom:2px solid #cfcfcf;padding:0 5px 0 7px;font-size:14px;color:#17708f;white-space:nowrap}
 svg{margin-bottom:3px}`,
 `<slot></slot><svg width="12" height="9" viewBox="0 0 12 9"><path d="M1 1l5 6 5-6" fill="none" stroke="#0d6f8f" stroke-width="2"/></svg>`);

def('ui-viewport',`:host{display:block;position:relative;flex:none;box-sizing:border-box;width:1037px;height:755px;border-bottom:1px solid #f2a65a;box-shadow:-1px 0 0 #f2a65a;overflow:hidden;
 background:linear-gradient(#b9bbbd 0,#d2d4d6 38%,#e6e8ea 70%,#e7e9eb 100%);margin-left:1px}`,`<slot></slot>`);
def('ui-model',`:host{position:absolute;left:5px;bottom:3px;font:13px/1 "Liberation Sans",sans-serif;color:#f2a65a}`,`<slot></slot>`);

def('ui-dialog',`:host{position:absolute;left:4px;top:99px;width:512px;height:705px;box-sizing:border-box;background:#efefef;border:1px solid #dcdcdc;border-top:0;display:flex;flex-direction:column;z-index:3}
 .h{height:25px;background:#559fba;color:#fff;font-size:14px;display:flex;align-items:center;padding:0 5px 0 5px;margin:0 -1px;flex:none}
 .h span{margin-left:7px;flex:1}
 .tabs{display:flex;margin:8px 0 -1px 8px;align-items:flex-end;height:31px;flex:none;position:relative;z-index:1}
 .tab{box-sizing:border-box;width:51px;height:29px;border:1px solid #c8c8c8;border-bottom:0;background:#efefef;display:flex;align-items:center;justify-content:center;font-size:12px}
 .tab.on{width:56px;height:31px;background:#fff;border-color:#bbb;padding-bottom:2px}
 .p{box-sizing:border-box;margin-left:8px;width:493px;height:594px;background:#fff;border:1px solid #bbb;padding-left:4px;flex:none}
 .acts{display:flex;justify-content:flex-end;gap:5px;margin:12px 15px 0 0}`,
 h=>`<div class="h"><svg width="16" height="16" viewBox="0 0 16 16"><circle cx="8" cy="8" r="4.500" fill="none" stroke="#fff" stroke-width="3"/><path d="M8 1v2M8 13v2M1 8h2M13 8h2M3 3l1.500 1.500M11.500 11.500L13 13M13 3l-1.500 1.500M4.500 11.500L3 13" stroke="#fff" stroke-width="2"/></svg>
  <span>${h.getAttribute('heading')}</span>
  <svg width="14" height="14" viewBox="0 0 14 14" style="margin-right:6px"><path d="M8 2.500A5 5 0 1 1 3 5" fill="none" stroke="#fff" stroke-width="1.800"/><path d="M9 0v5H5z" fill="#fff"/></svg>
  <svg width="13" height="13" viewBox="0 0 13 13" style="margin-right:3px"><path d="M1 1l11 11M12 1L1 12" stroke="#fff" stroke-width="2"/></svg></div>
  <div class="tabs"><div class="tab on">定义</div><div class="tab">摩擦</div><div class="tab" style="width:52px">驱动</div></div>
  <div class="p"><slot></slot></div><div class="acts"><slot name="actions"></slot></div>`);

def('ui-section',`:host{display:block;box-sizing:border-box;width:483px;border-bottom:2px solid #dcdcdc;padding:0 9px 8px}
 :host([closed]){padding-bottom:0}
 .h{display:flex;align-items:center;justify-content:space-between;height:var(--h,30px);margin:0 -3px 0 -2px;font-size:14px;color:#17708f}
 .h span{margin-bottom:2px}
 :host([closed]) .h{margin-bottom:-5px}`,
 h=>`<div class="h"><span>${h.getAttribute('title')}</span><svg width="12" height="9" viewBox="0 0 12 9"><path d="${h.hasAttribute('closed')?'M1 1l5 6 5-6':'M1 8l5-6 5 6'}" fill="none" stroke="#0d6f8f" stroke-width="2"/></svg></div><slot></slot>`,
 h=>{h.removeAttribute('title')});

def('ui-row',`:host{display:flex;align-items:center;gap:2px;font-size:12px;color:#333;white-space:nowrap}
 :host([off]){color:#aaa}
 ::slotted(:first-child){margin-right:auto}
 ::slotted(span),::slotted(ui-label){margin-bottom:2px}`,`<slot></slot>`,
 h=>{h.style.height=h.getAttribute('h')+'px'});

def('ui-label',`:host{display:flex;align-items:center;gap:6px;padding-left:2px}
 svg{margin-top:2px}`,
 `<svg width="12" height="11" viewBox="0 0 12 11"><path d="M1.500 6L4.500 9.300L10.800 1.500" fill="none" stroke="#1fbf3a" stroke-width="2.600"/></svg><slot></slot>`);

def('ui-check',`:host{display:flex;align-items:center;gap:5px}.b{width:11px;height:11px;border:1px solid #333;background:#fff}`,`<div class="b"></div><slot></slot>`);

def('ui-hilite',`:host{display:flex;align-items:center;height:32px;background:#fedf76;color:#333;flex:1 1 auto}
 :host([w]){flex:none;justify-content:center}`,`<slot></slot>`,
 h=>{if(h.getAttribute('w'))h.style.width=h.getAttribute('w')+'px'});

def('ui-btn',`:host{display:flex;align-items:center;justify-content:center;box-sizing:border-box;border:1px solid #aaa;background:#fff;flex:none}
 :host([off]){border-color:#d4d4d4}:host([off]) ::slotted(svg){opacity:.4}`,`<slot></slot>`,
 h=>{h.style.width=h.getAttribute('w')+'px';h.style.height=h.getAttribute('h')+'px'});

def('ui-split',`:host{display:flex;box-sizing:border-box;height:32px;width:49px;flex:none;border:1px solid #aaa;background:#fff}
 .i{width:31px;display:flex;align-items:center;justify-content:center;border-right:1px solid #aaa}
 .a{flex:1;display:flex;align-items:center;justify-content:center}
 :host([off]){border-color:#d4d4d4}:host([off]) .i{border-color:#d4d4d4}:host([off]) ::slotted(svg){opacity:.4}`,
 h=>`<div class="i"><slot></slot></div><div class="a">${tri(h.hasAttribute('off')?'#aaa':'#222',6,3)}</div>`);

def('ui-select',`:host{display:flex;align-items:center;box-sizing:border-box;border:1px solid #a9a9a9;background:#fff;color:#333;padding:0 4px 0 4px;gap:2px;flex:none;font-size:12px}
 :host([off]){border-color:#d4d4d4;background:#f9f9f9;color:#888}
 .t{flex:1;margin-bottom:2px}`,
 h=>`<slot name="icon"></slot><span class="t"><slot></slot></span>${tri(h.hasAttribute('off')?'#bbb':'#222',8,4)}`,
 h=>{h.style.width=h.getAttribute('w')+'px';h.style.height=h.getAttribute('h')+'px'});

def('ui-input',`:host{display:flex;align-items:center;box-sizing:border-box;height:23px;border:1px solid #a9a9a9;background:#fff;padding:0 4px 2px;flex:none;font-size:12px;color:#333;white-space:nowrap}
 :host([mono]){font:16px/1 "Liberation Mono",monospace;padding:0 3px 0 22px}
 .c{display:block;flex:1;min-width:0;overflow:hidden}`,
 `<span class="c"><slot></slot></span>`,
 h=>{h.style.width=h.getAttribute('w')+'px'});

def('ui-action',`:host{display:flex;align-items:center;justify-content:center;box-sizing:border-box;width:54px;height:25px;padding-bottom:2px;background:#dedede;border:1px solid #a9a9a9;font-size:12px;color:#333}
 :host([primary]){background:#74b3c9;border-color:#74b3c9;color:#fff}`,`<slot></slot>`);

def('ui-window',`:host{position:absolute;left:1307px;top:57px;width:20px;height:493px;background:#fff;border-radius:4px 0 0 4px;box-shadow:-3px 1px 6px rgba(0,0,0,.4);overflow:hidden;z-index:2;display:block}
 .b{height:39px;background:#75524e}.c{height:23px;background:#b6d8f6;position:relative}
 .d{position:absolute;left:3px;top:3px;width:18px;height:18px;border-radius:50%;background:#3fa6ea}
 .l{position:absolute;left:0;right:0;top:361px;height:1px;background:#e4e4e4}
 .t{position:absolute;left:4px;top:405px;font-size:12px;color:#222}`,
 `<div class="b"></div><div class="c"><div class="d"></div></div><div class="l"></div><div class="t">来</div>`);

def('ui-note',`:host{display:block;position:absolute;inset:0;z-index:5;pointer-events:none}
 .t{position:absolute;left:555px;top:510px;font-size:16px;line-height:18px;color:#ff4040;white-space:nowrap}
 svg{position:absolute;left:0;top:0;display:block}`,
 `<svg width="1316" height="882"><path fill="#ff3b3b" d="M118 471.500L757.600 571.500L758.500 567L775 575L755 582L755.400 577.500L118 472.500Z"/></svg><div class="t"><slot></slot></div>`);

def('ui-mark',`:host{position:absolute;right:0;top:862px;z-index:4;font:14px/1 "Liberation Serif","Noto Sans CJK SC",serif;font-weight:300;color:#66727a;white-space:nowrap;letter-spacing:1.200px;text-shadow:0 0 2px #fff}`,`<slot></slot>`);
</script>
</body></html>
